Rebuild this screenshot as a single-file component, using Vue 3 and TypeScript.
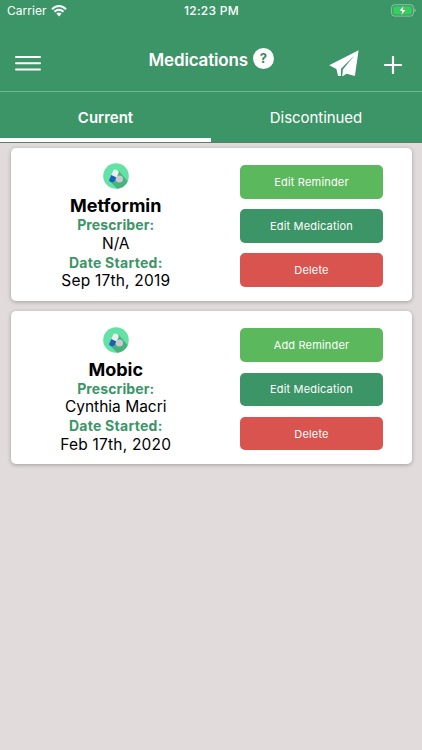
<script setup lang="ts">
interface Medication {
  name: string
  prescriber: string
  started: string
  reminder: string
}

const medications: Medication[] = [
  { name: 'Metformin', prescriber: 'N/A', started: 'Sep 17th, 2019', reminder: 'Edit Reminder' },
  { name: 'Mobic', prescriber: 'Cynthia Macri', started: 'Feb 17th, 2020', reminder: 'Add Reminder' },
]
</script>

<template>
  <div class="screen">
    <header class="header">
      <div class="status">
        <div class="carrier">
          <span>Carrier</span>
          <svg class="wifi" viewBox="0 0 16 12">
            <path d="M1 4.3C5-.1 11-.1 15 4.3M3.5 6.8c2.7-2.7 6.3-2.7 9 0" fill="none" stroke="#fff" stroke-width="2" />
            <path d="M5.4 8.6c1.6-1.4 3.6-1.4 5.2 0L8 11.4z" fill="#fff" />
          </svg>
        </div>
        <span class="time">12:23 PM</span>
        <div class="power">
          <svg class="battery" viewBox="0 0 25 13">
            <rect x=".6" y=".7" width="21.8" height="11.4" rx="3" fill="none" stroke="#fff" stroke-opacity=".42" />
            <rect x="2.2" y="2.2" width="18.6" height="8.4" rx="1.8" fill="#33d15b" />
            <path d="M23.5 4.5c1.5.8 1.5 3 0 3.8z" fill="#fff" fill-opacity=".5" />
            <path d="M13 1.2 7.7 7h3.1l-.9 4.8L15.3 5.8h-3.2z" fill="#fff" stroke="#3c9567" stroke-width=".6" />
          </svg>
        </div>
      </div>
      <div class="bar">
        <svg class="menu" viewBox="0 0 26 17">
          <path d="M1 2h24M1 8.3h24M1 14.6h24" stroke="#fff" stroke-width="2" stroke-linecap="round" />
        </svg>
        <div class="heading">
          <h1>Medications</h1>
          <span class="help">?</span>
        </div>
        <div class="actions">
          <svg class="send" viewBox="0 0 30 27">
            <path d="M29.6.2.2 15.3l7.2 3.7 1.7 7.1h2.7l.3-7.4L25.4 5.6 13.9 19.4l-.7 6.7h.8l3.5-2.4 8.4 2.4z" fill="#fff" />
          </svg>
          <svg class="plus" viewBox="0 0 18 18">
            <path d="M9 1v16M1 9h16" stroke="#fff" stroke-width="2.2" stroke-linecap="round" />
          </svg>
        </div>
      </div>
      <nav class="tabs">
        <div class="tab active"><span>Current</span></div>
        <div class="tab"><span>Discontinued</span></div>
      </nav>
    </header>

    <main class="list">
      <article v-for="med in medications" :key="med.name" class="card">
        <div class="info">
          <svg class="pill" viewBox="0 0 26 26">
            <circle cx="13" cy="13" r="12.8" fill="#63e2a5" />
            <path d="m15 7 9.7 11.2c-2.2 4.7-6.2 7.2-10.6 7.5L7 18.3z" fill="#48b27e" />
            <g transform="rotate(25 11 13.2)">
              <rect x="8" y="6.4" width="5.8" height="13.6" rx="2.4" fill="#ecefef" />
              <path d="M8 13.2h5.8v4.4a2.4 2.4 0 0 1-2.4 2.4h-1a2.4 2.4 0 0 1-2.4-2.4z" fill="#1563b5" />
            </g>
            <circle cx="16.4" cy="16" r="3.6" fill="#c8cbce" />
          </svg>
          <h2>{{ med.name }}</h2>
          <p class="label">Prescriber:</p>
          <p class="value">{{ med.prescriber }}</p>
          <p class="label wide">Date Started:</p>
          <p class="value date">{{ med.started }}</p>
        </div>
        <div class="buttons">
          <button class="reminder">{{ med.reminder }}</button>
          <button class="edit">Edit Medication</button>
          <button class="delete">Delete</button>
        </div>
      </article>
    </main>
  </div>
</template>

<style>
body {
  background: #e1dbdb;
}
</style>

<style scoped>
.screen {
  height: 750px;
  overflow: hidden;
  background: #e1dbdb;
  color: #000;
  font-family: Inter, 'Liberation Sans', sans-serif;
}
.header {
  box-sizing: border-box;
  height: 143px;
  background: #3c9567;
  color: #fff;
  border-bottom: 1px solid #59806b;
}
.status {
  box-sizing: border-box;
  display: grid;
  grid-template-columns: 1fr auto 1fr;
  align-items: center;
  height: 22px;
  padding: 0 6px 1px 7px;
  font-size: 12px;
}
.carrier {
  display: flex;
  align-items: center;
  gap: 4px;
  letter-spacing: 0.05px;
}
.wifi {
  width: 16px;
  height: 12px;
}
.time {
  font-weight: 500;
  letter-spacing: 0.25px;
}
.power {
  display: flex;
  justify-content: flex-end;
}
.battery {
  width: 25px;
  height: 13px;
}
.bar {
  box-sizing: border-box;
  display: grid;
  grid-template-columns: 1fr auto 1fr;
  height: 70px;
  padding: 0 19px 0 15px;
  border-bottom: 1px solid #75b392;
}
.menu {
  width: 26px;
  height: 17px;
  margin-top: 33px;
}
.heading {
  display: flex;
  gap: 5px;
  padding: 26px 0 0 4.5px;
}
h1 {
  margin: 1px 0 0;
  font-size: 17px;
  font-weight: 600;
  line-height: 22px;
  letter-spacing: -0.15px;
}
.help {
  width: 21px;
  height: 21px;
  border-radius: 50%;
  background: #fff;
  color: #3c8662;
  font-size: 13px;
  font-weight: 700;
  line-height: 21px;
  text-align: center;
}
.actions {
  display: flex;
  justify-content: flex-end;
  gap: 26px;
}
.send {
  width: 30px;
  height: 27px;
  margin-top: 28px;
}
.plus {
  width: 18px;
  height: 18px;
  margin: 34px 1px 0 -1px;
}
.tabs {
  display: grid;
  grid-template-columns: 1fr 1fr;
  height: 50px;
}
.tab {
  box-sizing: border-box;
  height: 50px;
  font-size: 15px;
  line-height: 51px;
  text-align: center;
}
.tab:not(.active) {
  padding-right: 1px;
  letter-spacing: -0.05px;
}
.tab.active {
  border-bottom: 4px solid #fff;
  font-weight: 600;
}
.list {
  display: grid;
  gap: 10.4px;
  padding: 5px 10.5px 0;
}
.card {
  display: grid;
  grid-template-columns: 210.5px 143px;
  column-gap: 19px;
  height: 153px;
  border-radius: 5px;
  background: #fff;
  box-shadow: 0 1px 4px rgba(0, 0, 0, 0.28);
}
.info {
  display: flex;
  flex-direction: column;
  align-items: center;
  padding-top: 15.2px;
  white-space: nowrap;
}
.pill {
  width: 26px;
  height: 26px;
  margin-bottom: 7.3px;
}
h2 {
  margin: 0;
  font-size: 18px;
  font-weight: 700;
  line-height: 20px;
}
p {
  margin: 0;
  line-height: 18.6px;
}
.label {
  color: #3c9567;
  font-size: 14px;
  font-weight: 700;
  letter-spacing: 0.1px;
}
.label.wide {
  letter-spacing: 0.27px;
}
.value {
  font-size: 15.5px;
}
.value.date {
  letter-spacing: 0.2px;
}
.buttons {
  display: flex;
  flex-direction: column;
  gap: 10.5px;
  padding-top: 17px;
}
button {
  width: 143px;
  height: 33.7px;
  padding: 0;
  border: 0;
  border-radius: 5px;
  color: #fff;
  font: 400 11px Inter, 'Liberation Sans', sans-serif;
  letter-spacing: 0.18px;
}
.reminder {
  background: #5cb85c;
}
.edit {
  background: #3c9567;
}
.delete {
  background: #d9534f;
}
</style>
